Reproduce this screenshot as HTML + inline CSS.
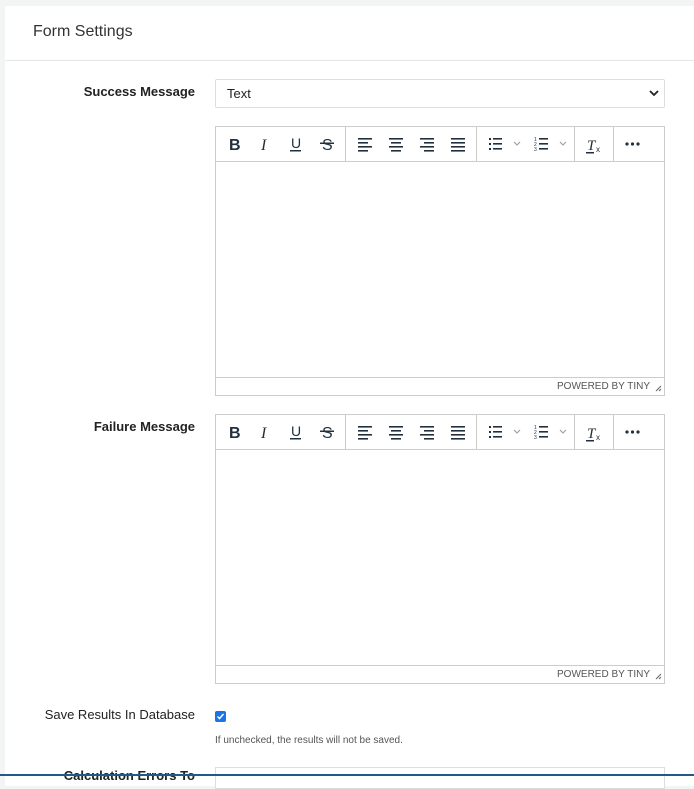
<!DOCTYPE html>
<html><head><style>
body{margin:0;width:694px;height:776px;background:#f3f4f4;font-family:"Liberation Sans",sans-serif;position:relative;overflow:hidden}
.card{position:absolute;left:5px;top:6px;width:700px;height:780px;background:#fff}
.hdr{position:absolute;left:0;top:0;right:0;height:54px;border-bottom:1px solid #e6e6e6}
.hdr span{position:absolute;left:28px;top:17px;font-size:16px;color:#333}
.lbl{position:absolute;right:499px;font-size:13px;color:#222;text-align:right;white-space:nowrap}
.b{font-weight:bold}
.sel{position:absolute;left:215px;top:79px;width:448px;height:27px;border:1px solid #ddd;border-radius:2px;font-size:13px;color:#222}
.sel span{position:absolute;left:11px;top:6px}
.ed{position:absolute;left:215px;width:448px;height:268px;border:1px solid #ccc}
.tb{position:absolute;left:0;top:0;width:448px;height:34px;border-bottom:1px solid #ccc}
.sep{position:absolute;top:0;width:1px;height:34px;background:#ccc}
.st{position:absolute;left:0;bottom:0;width:448px;height:17px;border-top:1px solid #ccc;font-size:10px;color:#555}
.st span{position:absolute;right:14px;top:3px}
svg{position:absolute;left:0;top:0}
.chk{position:absolute;left:215px;top:711px;width:11px;height:11px;background:#1a73e8;border-radius:2px}
.help{position:absolute;left:215px;top:735px;font-size:10px;color:#555}
</style></head><body>
<div class="card">
<div class="hdr"><span>Form Settings</span></div>
</div>
<div class="lbl b" style="top:84px">Success Message</div>
<div class="sel"><span>Text</span><svg width="448" height="27"><path d="M434 11l4 4 4-4" fill="none" stroke="#222" stroke-width="1.8"/></svg></div>

<div class="ed" style="top:126px">
<div class="tb">
<div class="sep" style="left:129px"></div><div class="sep" style="left:260px"></div><div class="sep" style="left:358px"></div><div class="sep" style="left:397px"></div>
<svg width="448" height="34" font-family="Liberation Sans">
<text x="13" y="23" font-size="16" font-weight="bold" fill="#222f3e">B</text>
<text x="45" y="23" font-size="16" font-style="italic" fill="#222f3e" font-family="Liberation Serif">I</text>
<text x="75" y="21" font-size="14" fill="#222f3e">U</text><rect x="74" y="23" width="11" height="1.5" fill="#222f3e"/>
<text x="106" y="23" font-size="16" fill="#222f3e">S</text><rect x="104" y="15.5" width="14" height="1.5" fill="#222f3e"/>
<g fill="#222f3e">
<rect x="142" y="11" width="14" height="1.6"/><rect x="142" y="15" width="10" height="1.6"/><rect x="142" y="19" width="14" height="1.6"/><rect x="142" y="23" width="10" height="1.6"/>
<rect x="173" y="11" width="14" height="1.6"/><rect x="175" y="15" width="10" height="1.6"/><rect x="173" y="19" width="14" height="1.6"/><rect x="175" y="23" width="10" height="1.6"/>
<rect x="204" y="11" width="14" height="1.6"/><rect x="208" y="15" width="10" height="1.6"/><rect x="204" y="19" width="14" height="1.6"/><rect x="208" y="23" width="10" height="1.6"/>
<rect x="235" y="11" width="14" height="1.6"/><rect x="235" y="15" width="14" height="1.6"/><rect x="235" y="19" width="14" height="1.6"/><rect x="235" y="23" width="14" height="1.6"/>
<rect x="273" y="11" width="2" height="2"/><rect x="273" y="16" width="2" height="2"/><rect x="273" y="21" width="2" height="2"/>
<rect x="277" y="11" width="9" height="1.6"/><rect x="277" y="16" width="9" height="1.6"/><rect x="277" y="21" width="9" height="1.6"/>
<rect x="323" y="11" width="9" height="1.6"/><rect x="323" y="16" width="9" height="1.6"/><rect x="323" y="21" width="9" height="1.6"/>
<text x="318" y="14" font-size="5">1</text><text x="318" y="19" font-size="5">2</text><text x="318" y="24" font-size="5">3</text>
<text x="371" y="23" font-size="15" font-style="italic" font-family="Liberation Serif">T</text><text x="380" y="25" font-size="8">x</text><rect x="370" y="25" width="8" height="1.5"/>
<circle cx="411" cy="17" r="1.6"/><circle cx="416.5" cy="17" r="1.6"/><circle cx="422" cy="17" r="1.6"/>
</g>
<path d="M298 15l3 3 3-3M344 15l3 3 3-3" fill="none" stroke="#999" stroke-width="1"/>
</svg>
</div>
<div class="st"><span>POWERED BY TINY</span><svg width="448" height="17"><path d="M440 13l5-5M443 13l2-2" stroke="#666" stroke-width="1"/></svg></div>
</div>

<div class="lbl b" style="top:419px">Failure Message</div>
<div class="ed" style="top:414px">
<div class="tb">
<div class="sep" style="left:129px"></div><div class="sep" style="left:260px"></div><div class="sep" style="left:358px"></div><div class="sep" style="left:397px"></div>
<svg width="448" height="34" font-family="Liberation Sans">
<text x="13" y="23" font-size="16" font-weight="bold" fill="#222f3e">B</text>
<text x="45" y="23" font-size="16" font-style="italic" fill="#222f3e" font-family="Liberation Serif">I</text>
<text x="75" y="21" font-size="14" fill="#222f3e">U</text><rect x="74" y="23" width="11" height="1.5" fill="#222f3e"/>
<text x="106" y="23" font-size="16" fill="#222f3e">S</text><rect x="104" y="15.5" width="14" height="1.5" fill="#222f3e"/>
<g fill="#222f3e">
<rect x="142" y="11" width="14" height="1.6"/><rect x="142" y="15" width="10" height="1.6"/><rect x="142" y="19" width="14" height="1.6"/><rect x="142" y="23" width="10" height="1.6"/>
<rect x="173" y="11" width="14" height="1.6"/><rect x="175" y="15" width="10" height="1.6"/><rect x="173" y="19" width="14" height="1.6"/><rect x="175" y="23" width="10" height="1.6"/>
<rect x="204" y="11" width="14" height="1.6"/><rect x="208" y="15" width="10" height="1.6"/><rect x="204" y="19" width="14" height="1.6"/><rect x="208" y="23" width="10" height="1.6"/>
<rect x="235" y="11" width="14" height="1.6"/><rect x="235" y="15" width="14" height="1.6"/><rect x="235" y="19" width="14" height="1.6"/><rect x="235" y="23" width="14" height="1.6"/>
<rect x="273" y="11" width="2" height="2"/><rect x="273" y="16" width="2" height="2"/><rect x="273" y="21" width="2" height="2"/>
<rect x="277" y="11" width="9" height="1.6"/><rect x="277" y="16" width="9" height="1.6"/><rect x="277" y="21" width="9" height="1.6"/>
<rect x="323" y="11" width="9" height="1.6"/><rect x="323" y="16" width="9" height="1.6"/><rect x="323" y="21" width="9" height="1.6"/>
<text x="318" y="14" font-size="5">1</text><text x="318" y="19" font-size="5">2</text><text x="318" y="24" font-size="5">3</text>
<text x="371" y="23" font-size="15" font-style="italic" font-family="Liberation Serif">T</text><text x="380" y="25" font-size="8">x</text><rect x="370" y="25" width="8" height="1.5"/>
<circle cx="411" cy="17" r="1.6"/><circle cx="416.5" cy="17" r="1.6"/><circle cx="422" cy="17" r="1.6"/>
</g>
<path d="M298 15l3 3 3-3M344 15l3 3 3-3" fill="none" stroke="#999" stroke-width="1"/>
</svg>
</div>
<div class="st"><span>POWERED BY TINY</span><svg width="448" height="17"><path d="M440 13l5-5M443 13l2-2" stroke="#666" stroke-width="1"/></svg></div>
</div>

<div class="lbl" style="top:707px">Save Results In Database</div>
<div class="chk"><svg width="11" height="11"><path d="M2.5 5.5l2 2 4-4.5" fill="none" stroke="#fff" stroke-width="1.5"/></svg></div>
<div class="help">If unchecked, the results will not be saved.</div>
<div class="lbl b" style="top:768px">Calculation Errors To</div>
<div style="position:absolute;left:215px;top:767px;width:448px;height:20px;border:1px solid #ddd;background:#fff"></div>
<div style="position:absolute;left:0;top:774px;width:694px;height:2px;background:#1e5a8c"></div>
</body></html>
